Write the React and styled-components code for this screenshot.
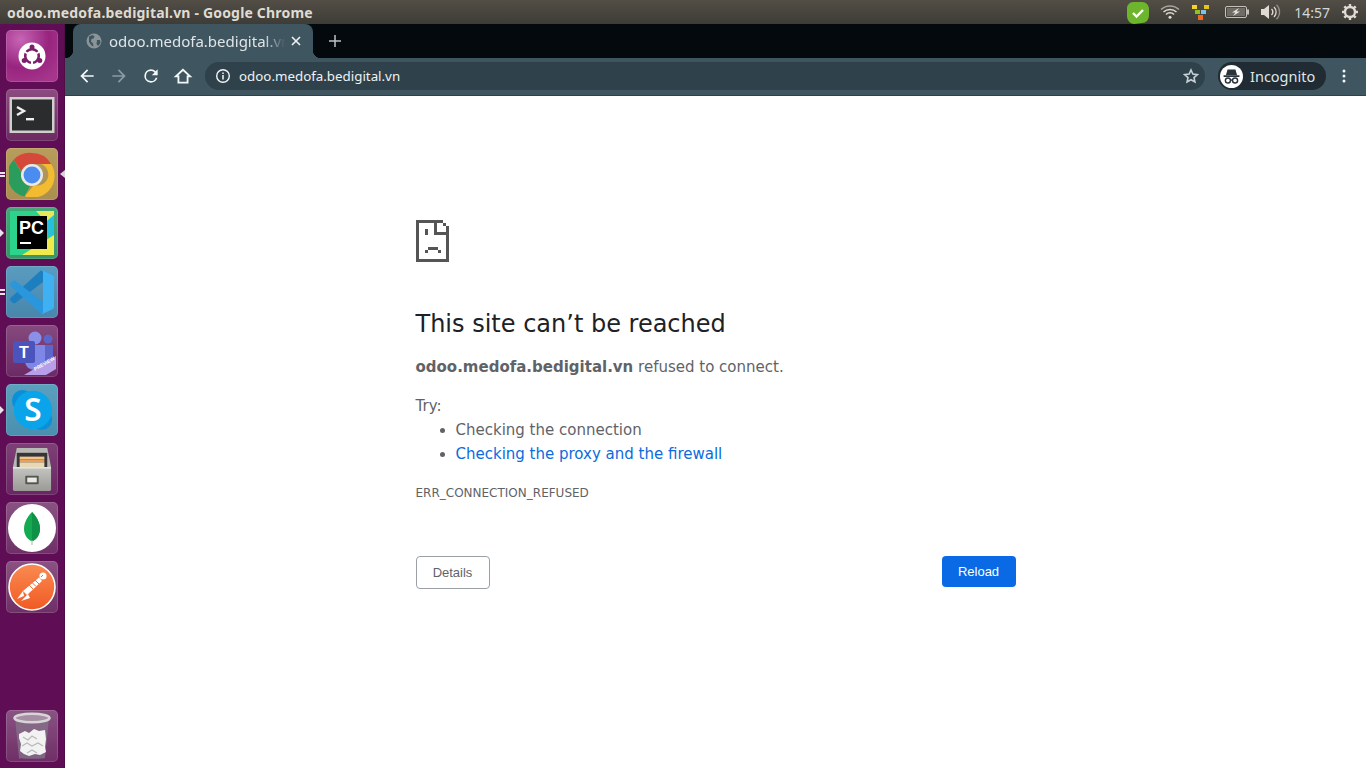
import React from 'react';
import styled, { createGlobalStyle } from 'styled-components';

const Global = createGlobalStyle`
  html, body { margin: 0; padding: 0; height: 100%; overflow: hidden; background: #fff; }
  #root { height: 100%; }
  * { box-sizing: border-box; }
`;
const Screen = styled.div`display: flex; flex-direction: column; width: 1366px; height: 768px; overflow: hidden;`;

/* top panel */
const Panel = styled.header`
  height: 24px; flex: none; display: flex; align-items: center; padding: 0 7px;
  background: linear-gradient(#524e46, #3e3c37);
  color: #dfdbd2; font: 700 14px "Noto Sans", sans-serif;
`;
const PanelTitle = styled.div`flex: 1; white-space: nowrap; letter-spacing: .18px;`;
const Tray = styled.div`display: flex; align-items: center; margin-right: 1px;`;
const TrayItem = styled.span`display: flex; align-items: center; margin-left: ${p => p.$gap}px;`;
const Clock = styled.span`margin-left: 13px; font: 400 14px "Noto Sans", sans-serif; color: #cfd8dc;`;

/* launcher + browser */
const Body = styled.div`flex: 1; display: flex; min-height: 0;`;
const Launcher = styled.nav`
  width: 65px; flex: none; display: flex; flex-direction: column; gap: 7px;
  padding: 6px 0 6px 6px; background: #5f0d55; border-right: 1px solid #4f0c47;
`;
const Tile = styled.div`
  position: relative; width: 52px; height: 52px; flex: none; border-radius: 5px;
  background: ${p => p.$bg};
  box-shadow: inset 0 0 0 1px rgba(255,255,255,.14);
  display: flex; align-items: center; justify-content: center;
  ${p => p.$bottom ? 'margin-top: auto;' : ''}
`;
const PipLeft = styled.i`
  position: absolute; left: -6px; top: ${p => p.$top}px; width: 0; height: 0;
  border-left: 4px solid #e8e4ea; border-top: 4px solid transparent; border-bottom: 4px solid transparent;
`;
const Dash = styled.i`
  position: absolute; left: -6px; top: ${p => p.$top}px; width: 5px; height: 2px; background: #e8e4ea;
`;
const PipRight = styled.i`
  position: absolute; right: -7px; top: 22px; width: 0; height: 0;
  border-right: 5px solid #d9d4da; border-top: 4px solid transparent; border-bottom: 4px solid transparent;
`;

const Browser = styled.div`flex: 1; min-width: 0; display: flex; flex-direction: column;`;
const TabStrip = styled.div`height: 34px; flex: none; display: flex; align-items: center; padding-left: 8px; background: #03090c;`;
const Tab = styled.div`
  position: relative; width: 240px; height: 34px; display: flex; align-items: center; padding: 0 12px 0 13px;
  background: #3f5660; border-radius: 8px 8px 0 0; color: #dfe5e8;
  font: 400 15px "Noto Sans", sans-serif;
  &::before, &::after { content: ""; position: absolute; bottom: 0; width: 8px; height: 8px; }
  &::before { left: -8px; background: radial-gradient(circle at 0 0, transparent 8px, #3f5660 8.5px); }
  &::after { right: -8px; background: radial-gradient(circle at 100% 0, transparent 8px, #3f5660 8.5px); }
`;
const TabTitle = styled.span`
  flex: 1; margin: 0 6px 0 7px; white-space: nowrap; overflow: hidden;
  -webkit-mask-image: linear-gradient(to right, #000 88%, transparent 100%);
  mask-image: linear-gradient(to right, #000 88%, transparent 100%);
`;
const NewTab = styled.span`display: flex; margin-left: 16px;`;
const Toolbar = styled.div`
  height: 38px; flex: none; display: flex; align-items: center; padding: 0 10px 1px 6px;
  background: #3f5660; border-bottom: 1px solid #2f414a;
`;
const ToolButton = styled.span`width: 32px; height: 32px; display: flex; align-items: center; justify-content: center; flex: none;`;
const Omnibox = styled.div`
  flex: 1; height: 28px; margin-left: 6px; border-radius: 14px; background: #2f414b;
  display: flex; align-items: center; padding: 0 6px 0 10px; color: #eef2f4;
  font: 400 13.33px "Noto Sans", sans-serif;
`;
const Url = styled.span`flex: 1; margin: 0 0 1px 8px;`;
const Incognito = styled.div`
  width: 108px; height: 28px; margin-left: 13px; border-radius: 14px; background: #202b33;
  display: flex; align-items: center; padding-left: 2px; color: #dfe5e8; font: 400 14.5px "Noto Sans", sans-serif;
`;
const IncognitoBadge = styled.span`width: 23px; height: 23px; border-radius: 50%; background: #fff; display: flex; align-items: center; justify-content: center; margin-right: 7px;`;
const MenuSlot = styled.span`width: 24px; margin-left: 6px; display: flex; justify-content: center;`;

/* page */
const Page = styled.main`flex: 1; background: #fff; font: 400 15px "DejaVu Sans", sans-serif; color: #5f6368;`;
const Content = styled.section`width: 600px; margin: 0 auto; padding-top: 124px;`;
const SadFile = styled.svg`display: block; width: 33px; height: 42px; shape-rendering: crispEdges;`;
const Heading = styled.h1`margin: 46px 0 0; font: 400 24px/32px "DejaVu Sans", sans-serif; color: #202124;`;
const Para = styled.p`margin: 15px 0 0; line-height: 24px;`;
const Try = styled.div`margin-top: 15px; line-height: 24px;`;
const Tips = styled.ul`margin: 0; padding-left: 40px; line-height: 24px;`;
const Link = styled.a`color: #0b6be0; text-decoration: none;`;
const Code = styled.div`margin-top: 19px; font-size: 12px; line-height: 16px; color: #5f6368;`;
const Actions = styled.div`margin-top: 55px; display: flex; justify-content: space-between; align-items: flex-start;`;
const Button = styled.button`
  width: 74px; height: ${p => p.$primary ? 31 : 33}px; border-radius: 4px; padding: 0;
  font: 400 13px "Liberation Sans", sans-serif;
  background: ${p => p.$primary ? '#0a6ae6' : '#fff'};
  color: ${p => p.$primary ? '#fff' : '#5f6368'};
  border: ${p => p.$primary ? 'none' : '1px solid #9aa0a6'};
`;

const Ic = ({ children, w = 18, h = 18, vb = '0 0 24 24', ...r }) => (
  <svg width={w} height={h} viewBox={vb} {...r}>{children}</svg>
);

const UbuntuLogo = () => (
  <Ic w={36} h={36} vb="0 0 36 36">
    <circle cx="18" cy="18" r="13.500" fill="#fff" />
    <circle cx="18" cy="18" r="6.800" fill="none" stroke="#7b1f6b" strokeWidth="2.600" />
    <g stroke="#fff" strokeWidth="2"><line x1="18" y1="18" x2="18" y2="7" transform="rotate(60 18 18)" /><line x1="18" y1="18" x2="18" y2="7" transform="rotate(180 18 18)" /><line x1="18" y1="18" x2="18" y2="7" transform="rotate(300 18 18)" /></g>
    <circle cx="18" cy="9" r="2.500" fill="#7b1f6b" /><circle cx="10.200" cy="22.500" r="2.500" fill="#7b1f6b" /><circle cx="25.800" cy="22.500" r="2.500" fill="#7b1f6b" />
  </Ic>
);
const Terminal = () => (
  <Ic w={46} h={40} vb="0 0 46 40">
    <rect x="0.500" y="2" width="45" height="36" fill="#cfcfcc" />
    <rect x="3" y="4.500" width="40" height="31" fill="#2a2c2d" />
    <path d="M8 12l7 4-7 4" fill="none" stroke="#f0f0f0" strokeWidth="2.400" />
    <rect x="17" y="23" width="8" height="2.400" fill="#f0f0f0" />
  </Ic>
);
const ChromeLogo = () => (
  <Ic w={46} h={46} vb="0 -1 48 48">
    <path d="M24 1a23 23 0 0 1 20 11.500H24a11.500 11.500 0 0 0-11 8L5 8A23 23 0 0 1 24 1z" fill="#d5493b" />
    <path d="M5 8l8 13.500a11.500 11.500 0 0 0 9 13.800L16 46.500A23 23 0 0 1 5 8z" fill="#2a9c5c" />
    <path d="M44 12.500A23 23 0 0 1 17 46.500l-0.500-.200L26 34.500a11.500 11.500 0 0 0 7-22z" fill="#f3bb2f" />
    <circle cx="24" cy="24" r="11.500" fill="#e9e9e9" />
    <circle cx="24" cy="24" r="8.800" fill="#4a8cf0" />
  </Ic>
);
const PyCharm = () => (
  <Ic w={44} h={44} vb="0 0 44 44">
    <rect width="44" height="44" fill="#2bd48a" />
    <path d="M26 0h18v20z" fill="#e7e75a" /><path d="M44 4v28L32 14z" fill="#27c0dc" /><path d="M12 44l32-20v20z" fill="#f0ea4d" />
    <rect x="7" y="5" width="30" height="33" fill="#000" />
    <text x="9" y="23" fontFamily="Liberation Sans" fontWeight="700" fontSize="18" fill="#fff">PC</text>
    <rect x="10" y="31" width="11" height="2" fill="#fff" />
  </Ic>
);
const VSCode = () => (
  <Ic w={44} h={44} vb="0 0 100 100">
    <path fill="#1e7fc0" d="M96.500 10.800L75.900.9c-2.400-1.200-5.300-.7-7.200 1.200L1.300 63.600c-1.800 1.700-1.800 4.500 0 6.200l5.500 5c1.500 1.300 3.700 1.400 5.300.2L93.300 13.400c2.700-2.100 6.700-.1 6.700 3.300v-.2c0-2.400-1.400-4.700-3.500-5.700z" />
    <path fill="#2a97dc" d="M96.500 89.100L75.900 99c-2.400 1.200-5.300.7-7.200-1.200L1.300 36.300c-1.800-1.700-1.800-4.500 0-6.200l5.500-5c1.500-1.300 3.700-1.400 5.300-.2l81.200 61.600c2.700 2.100 6.700.1 6.700-3.300v.2c0 2.400-1.400 4.700-3.500 5.700z" />
    <path fill="#3fb1f2" d="M75.900 99c-2.400 1.200-5.300.7-7.200-1.200 2.300 2.300 6.300.7 6.300-2.600V4.700c0-3.300-4-4.900-6.300-2.600 1.900-1.900 4.800-2.400 7.200-1.200l20.600 9.900c2.100 1 3.500 3.200 3.500 5.600v67.100c0 2.400-1.400 4.600-3.500 5.600z" />
  </Ic>
);
const Teams = () => (
  <Ic w={48} h={48} vb="0 0 48 48">
    <circle cx="27" cy="11" r="6.500" fill="#8a90e8" /><circle cx="40" cy="12" r="4.500" fill="#5d65c8" />
    <path d="M33 18h12v13c0 4-3 6-6 6h-6z" fill="#5d65c8" />
    <path d="M17 18h20v16c0 5-4 9-10 9s-10-4-10-9z" fill="#7e86e6" />
    <rect x="5" y="14" width="22" height="22" rx="2" fill="#4b53bc" />
    <text x="11" y="31" fontFamily="Liberation Sans" fontWeight="700" fontSize="16" fill="#fff">T</text>
    <path d="M16 48L48 29v13l-10 6z" fill="#b79ee8" />
    <text x="27" y="44" transform="rotate(-30 27 44)" fontFamily="Liberation Sans" fontWeight="700" fontSize="5" fill="#fff">PREVIEW</text>
  </Ic>
);
const Skype = () => (
  <Ic w={44} h={44} vb="0 0 46 46">
    <circle cx="13" cy="13" r="11" fill="#0b8fd6" /><circle cx="33" cy="33" r="11" fill="#0b8fd6" />
    <circle cx="24" cy="23" r="20" fill="#0aa4ea" />
    <text x="24" y="35" textAnchor="middle" fontFamily="Noto Sans" fontWeight="600" fontSize="33" fill="#fff">S</text>
  </Ic>
);
const Cabinet = () => (
  <Ic w={40} h={46} vb="0 0 42 46">
    <defs>
      <linearGradient id="cabinetBody" x1="0" y1="0" x2="0" y2="1"><stop offset="0" stopColor="#c4c4c0" /><stop offset="1" stopColor="#9a9a96" /></linearGradient>
    </defs>
    <path d="M5 1h32l4 20H1z" fill="#b9b9b5" />
    <rect x="5" y="6" width="32" height="17" fill="#35353a" />
    <rect x="8" y="10" width="26" height="3" fill="#f2c58a" /><rect x="8" y="13" width="26" height="3" fill="#ec9f55" /><rect x="8" y="16" width="26" height="6" fill="#e8d7b5" />
    <rect x="1" y="21" width="40" height="25" rx="1.500" fill="url(#cabinetBody)" />
    <rect x="1" y="21" width="40" height="1.500" fill="#e6e6e3" />
    <rect x="14" y="30" width="14" height="9" rx="1" fill="#55554f" /><rect x="16" y="32" width="10" height="5" fill="#e9e9e6" />
  </Ic>
);
const Mongo = () => (
  <Ic w={48} h={48} vb="0 0 48 48">
    <circle cx="24" cy="24" r="24" fill="#fff" />
    <path d="M24 8c6 6 8 12 8 17s-3 10-7 12h-2c-4-2-7-7-7-12s2-11 8-17z" fill="#13aa52" />
    <path d="M24 8c6 6 8 12 8 17s-3 10-7 12l-1 0z" fill="#0f9247" />
    <rect x="23.500" y="36" width="1" height="5" fill="#9db8a4" />
  </Ic>
);
const Postman = () => (
  <Ic w={48} h={48} vb="0 0 48 48">
    <defs>
      <linearGradient id="pmFill" x1="0" y1="0" x2="0" y2="1"><stop offset="0" stopColor="#f98b52" /><stop offset="1" stopColor="#f15a24" /></linearGradient>
    </defs>
    <circle cx="24" cy="24" r="23" fill="url(#pmFill)" stroke="#fff" strokeWidth="1.600" />
    <circle cx="35" cy="13" r="3.600" fill="#fff" />
    <path d="M31 14.500L34 18 19 32l-4-4z" fill="#fff" />
    <path d="M15 28l-6 8 7-3zM20 31l2 4-9 3 3-3z" fill="#fff" />
    <path d="M21 22l4 4M24 19.500l4 4M27 17l4 4" stroke="#f4703a" strokeWidth="1" />
    <path d="M33 14l2-2" stroke="#f4703a" strokeWidth="1" />
  </Ic>
);
const Trash = () => (
  <Ic w={38} h={48} vb="0 0 38 48">
    <path d="M2 6l4 40c0 1 26 1 26 0l4-40z" fill="#85708a" opacity=".8" />
    <ellipse cx="19" cy="6" rx="17.500" ry="4.200" fill="#a78ea4" stroke="#d6d6d6" strokeWidth="2.600" />
    <path d="M6 22l6-3 4 2 5-4 5 2 6-1 1 9-1 8 1 5-6 3-5-1-6 2-5-2-4-3 1-7-2-6z" fill="#f2f2f2" />
    <path d="M10 25l5 3 4-4 5 3M9 34l5-3 5 3 6-3 5 3M14 41l5-3 5 3" stroke="#b9b9b9" strokeWidth="1.100" fill="none" />
  </Ic>
);

const Tray1 = () => (
  <Ic w={22} h={23} vb="0 0 22 23">
    <path d="M6 1h9c4 0 7 3 7 7v6c0 5-3 8-7 8-3 0-5 1-8 1-4 0-7-4-7-8V7c0-3 3-6 6-6z" fill="#6db52d" />
    <path d="M6 12l3.500 3.500L16 9" fill="none" stroke="#fff" strokeWidth="2.400" />
  </Ic>
);
const Wifi = () => (
  <Ic w={20} h={14} vb="0 0 20 14">
    <g fill="none" stroke="#a8a59d" strokeWidth="1.500"><path d="M1 4.500a13 13 0 0 1 18 0" /></g>
    <g fill="none" stroke="#dfdbd2" strokeWidth="1.500"><path d="M3.500 7a9.500 9.500 0 0 1 13 0M6 9.500a5.500 5.500 0 0 1 8 0" /></g>
    <circle cx="10" cy="12.300" r="1.500" fill="#dfdbd2" />
  </Ic>
);
const Colorful = () => (
  <Ic w={17} h={15} vb="0 0 17 15" shapeRendering="crispEdges">
    <rect x="0" y="0" width="5" height="4" fill="#f5d327" /><rect x="12" y="0" width="5" height="4" fill="#e5c422" />
    <rect x="3" y="5" width="5" height="4" fill="#8ec31f" /><rect x="9" y="5" width="5" height="4" fill="#7cc3e8" />
    <rect x="6" y="10" width="5" height="5" fill="#f26a1c" />
  </Ic>
);
const Battery = () => (
  <Ic w={24} h={12} vb="0 0 24 12">
    <rect x=".5" y=".5" width="21" height="11" rx="1.500" fill="none" stroke="#c4c1ba" />
    <rect x="2" y="2" width="18" height="8" fill="#6f6c65" />
    <rect x="22" y="3.500" width="2" height="5" fill="#c4c1ba" />
    <path d="M14 2L7 6.500h3.500L8 10l7-4.500h-3.500z" fill="#e8e6e0" />
  </Ic>
);
const Volume = () => (
  <Ic w={20} h={16} vb="0 0 20 16">
    <path d="M0 5h3l5-4v14l-5-4H0z" fill="#dfdbd2" />
    <path d="M10.500 5a4 4 0 0 1 0 6" fill="none" stroke="#dfdbd2" strokeWidth="1.400" />
    <path d="M13 3a7 7 0 0 1 0 10" fill="none" stroke="#dfdbd2" strokeWidth="1.300" />
    <path d="M15.500 .8a10 10 0 0 1 0 14.400" fill="none" stroke="#918e86" strokeWidth="1.300" />
  </Ic>
);
const Gear = () => (
  <Ic w={16} h={16} vb="0 0 16 16">
    <circle cx="8" cy="8" r="5" fill="none" stroke="#dfdbd2" strokeWidth="2.400" />
    <g stroke="#dfdbd2" strokeWidth="2.400">
      <line x1="8" y1="0" x2="8" y2="3" /><line x1="8" y1="13" x2="8" y2="16" /><line x1="0" y1="8" x2="3" y2="8" /><line x1="13" y1="8" x2="16" y2="8" />
      <line x1="2.300" y1="2.300" x2="4.400" y2="4.400" /><line x1="11.600" y1="11.600" x2="13.700" y2="13.700" /><line x1="2.300" y1="13.700" x2="4.400" y2="11.600" /><line x1="11.600" y1="4.400" x2="13.700" y2="2.300" />
    </g>
  </Ic>
);

const white = '#f4f7f8';
const Back = ({ c = white }) => <Ic w={20} h={20}><path fill={c} d="M20 11H7.830l5.590-5.590L12 4l-8 8 8 8 1.410-1.410L7.830 13H20z" /></Ic>;
const Fwd = ({ c = '#8b9ba3' }) => <Ic w={20} h={20}><path fill={c} d="M4 13h12.170l-5.590 5.590L12 20l8-8-8-8-1.410 1.410L16.170 11H4z" /></Ic>;
const Reload = () => <Ic w={20} h={20}><path fill={white} d="M17.650 6.350A7.960 7.960 0 0 0 12 4a8 8 0 1 0 7.740 10h-2.080A6 6 0 1 1 12 6c1.660 0 3.140.69 4.220 1.780L13 11h7V4z" /></Ic>;
const Home = () => <Ic w={20} h={20}><path fill="none" stroke={white} strokeWidth="2.200" d="M12 4.500L3.500 12.500H6.500V20h11v-7.500h3z" /></Ic>;
const Info = () => (
  <Ic w={16} h={16} vb="0 0 16 16">
    <circle cx="8" cy="8" r="6.300" fill="none" stroke={white} strokeWidth="1.400" />
    <rect x="7.250" y="7" width="1.500" height="4.500" fill={white} /><rect x="7.250" y="4.500" width="1.500" height="1.500" fill={white} />
  </Ic>
);
const Star = () => <Ic w={16} h={16} vb="0 0 24 24"><path fill="none" stroke="#c7d0d4" strokeWidth="2.400" d="M12 3l2.800 6.100 6.700.8-5 4.500 1.400 6.600L12 17.600 6.100 21l1.400-6.600-5-4.500 6.700-.8z" /></Ic>;
const Spy = () => (
  <Ic w={19} h={19} vb="0 0 24 24">
    <path fill="#2a343b" d="M7 3h10l2 7H5zM2 10.500h20V12.500H2z" />
    <circle cx="7.500" cy="17" r="3.200" fill="none" stroke="#2a343b" strokeWidth="1.800" />
    <circle cx="16.500" cy="17" r="3.200" fill="none" stroke="#2a343b" strokeWidth="1.800" />
    <path d="M10.500 16.500h3" stroke="#2a343b" strokeWidth="1.800" />
  </Ic>
);
const Dots = () => <Ic w={4} h={14} vb="0 0 4 14"><circle cx="2" cy="2" r="1.500" fill={white} /><circle cx="2" cy="7" r="1.500" fill={white} /><circle cx="2" cy="12" r="1.500" fill={white} /></Ic>;
const Globe = () => (
  <Ic w={16} h={16} vb="0 0 16 16">
    <circle cx="8" cy="8" r="7.500" fill="#8a9499" />
    <path d="M3 3.500l3.500-1.500 2 1.500-1 2-2 .5-.5 2.500 2 2 .5 3-2-1-2.500-3.500zM11 7h3l.5 3-2.500 3-1.500-2z" fill="#3f5660" />
  </Ic>
);
const Close = () => <Ic w={10} h={10} vb="0 0 10 10"><path d="M1 1l8 8M9 1L1 9" stroke="#eef2f4" strokeWidth="1.600" /></Ic>;
const Plus = () => <Ic w={12} h={12} vb="0 0 12 12"><path d="M6 0v12M0 6h12" stroke="#bcc3c6" strokeWidth="1.500" /></Ic>;

const mauve = 'linear-gradient(#8a5283, #6e2f66)';

const App = () => (
  <Screen>
    <Global />
    <Panel>
      <PanelTitle>odoo.medofa.bedigital.vn - Google Chrome</PanelTitle>
      <Tray>
        <TrayItem $gap={0}><Tray1 /></TrayItem>
        <TrayItem $gap={11}><Wifi /></TrayItem>
        <TrayItem $gap={12}><Colorful /></TrayItem>
        <TrayItem $gap={16}><Battery /></TrayItem>
        <TrayItem $gap={12}><Volume /></TrayItem>
        <Clock>14:57</Clock>
        <TrayItem $gap={12}><Gear /></TrayItem>
      </Tray>
    </Panel>
    <Body>
      <Launcher>
        <Tile $bg="radial-gradient(circle at 28% 18%, #c765b5, #98247f 50%, #a6368c 85%)"><UbuntuLogo /></Tile>
        <Tile $bg="linear-gradient(#8d4c80, #6c2a62)"><Terminal /></Tile>
        <Tile $bg="linear-gradient(#b89c5c, #a98f50)"><Dash $top={24} /><Dash $top={27} /><PipRight /><ChromeLogo /></Tile>
        <Tile $bg="linear-gradient(#45a877, #3a9568)"><PipLeft $top={22} /><PyCharm /></Tile>
        <Tile $bg="linear-gradient(#5a9cc0, #4886ab)"><Dash $top={23} /><Dash $top={27} /><VSCode /></Tile>
        <Tile $bg="linear-gradient(#854a7e, #6c2a64)"><Teams /></Tile>
        <Tile $bg="linear-gradient(#5ba0bf, #4a8fae)"><PipLeft $top={22} /><Skype /></Tile>
        <Tile $bg="linear-gradient(#7d4076, #692663)"><Cabinet /></Tile>
        <Tile $bg={mauve}><Mongo /></Tile>
        <Tile $bg={mauve}><Postman /></Tile>
        <Tile $bottom $bg={mauve}><Trash /></Tile>
      </Launcher>
      <Browser>
        <TabStrip>
          <Tab><Globe /><TabTitle>odoo.medofa.bedigital.vn</TabTitle><Close /></Tab>
          <NewTab><Plus /></NewTab>
        </TabStrip>
        <Toolbar>
          <ToolButton><Back /></ToolButton>
          <ToolButton><Fwd /></ToolButton>
          <ToolButton><Reload /></ToolButton>
          <ToolButton><Home /></ToolButton>
          <Omnibox><Info /><Url>odoo.medofa.bedigital.vn</Url><Star /></Omnibox>
          <Incognito><IncognitoBadge><Spy /></IncognitoBadge>Incognito</Incognito>
          <MenuSlot><Dots /></MenuSlot>
        </Toolbar>
        <Page>
          <Content>
            <SadFile viewBox="0 0 33 42" fill="#555">
              <rect x="0" y="0" width="3" height="42" /><rect x="0" y="39" width="33" height="3" />
              <rect x="30" y="6" width="3" height="36" /><rect x="0" y="0" width="27" height="3" />
              <rect x="27" y="3" width="3" height="3" /><rect x="18" y="0" width="3" height="15" />
              <rect x="18" y="12" width="15" height="3" /><rect x="9" y="9" width="3" height="6" />
              <rect x="12" y="27" width="10" height="3" /><rect x="9" y="30" width="3" height="3" /><rect x="22" y="30" width="3" height="3" />
            </SadFile>
            <Heading>This site can’t be reached</Heading>
            <Para><b>odoo.medofa.bedigital.vn</b> refused to connect.</Para>
            <Try>Try:</Try>
            <Tips>
              <li>Checking the connection</li>
              <li><Link>Checking the proxy and the firewall</Link></li>
            </Tips>
            <Code>ERR_CONNECTION_REFUSED</Code>
            <Actions>
              <Button>Details</Button>
              <Button $primary>Reload</Button>
            </Actions>
          </Content>
        </Page>
      </Browser>
    </Body>
  </Screen>
);
export default App;
